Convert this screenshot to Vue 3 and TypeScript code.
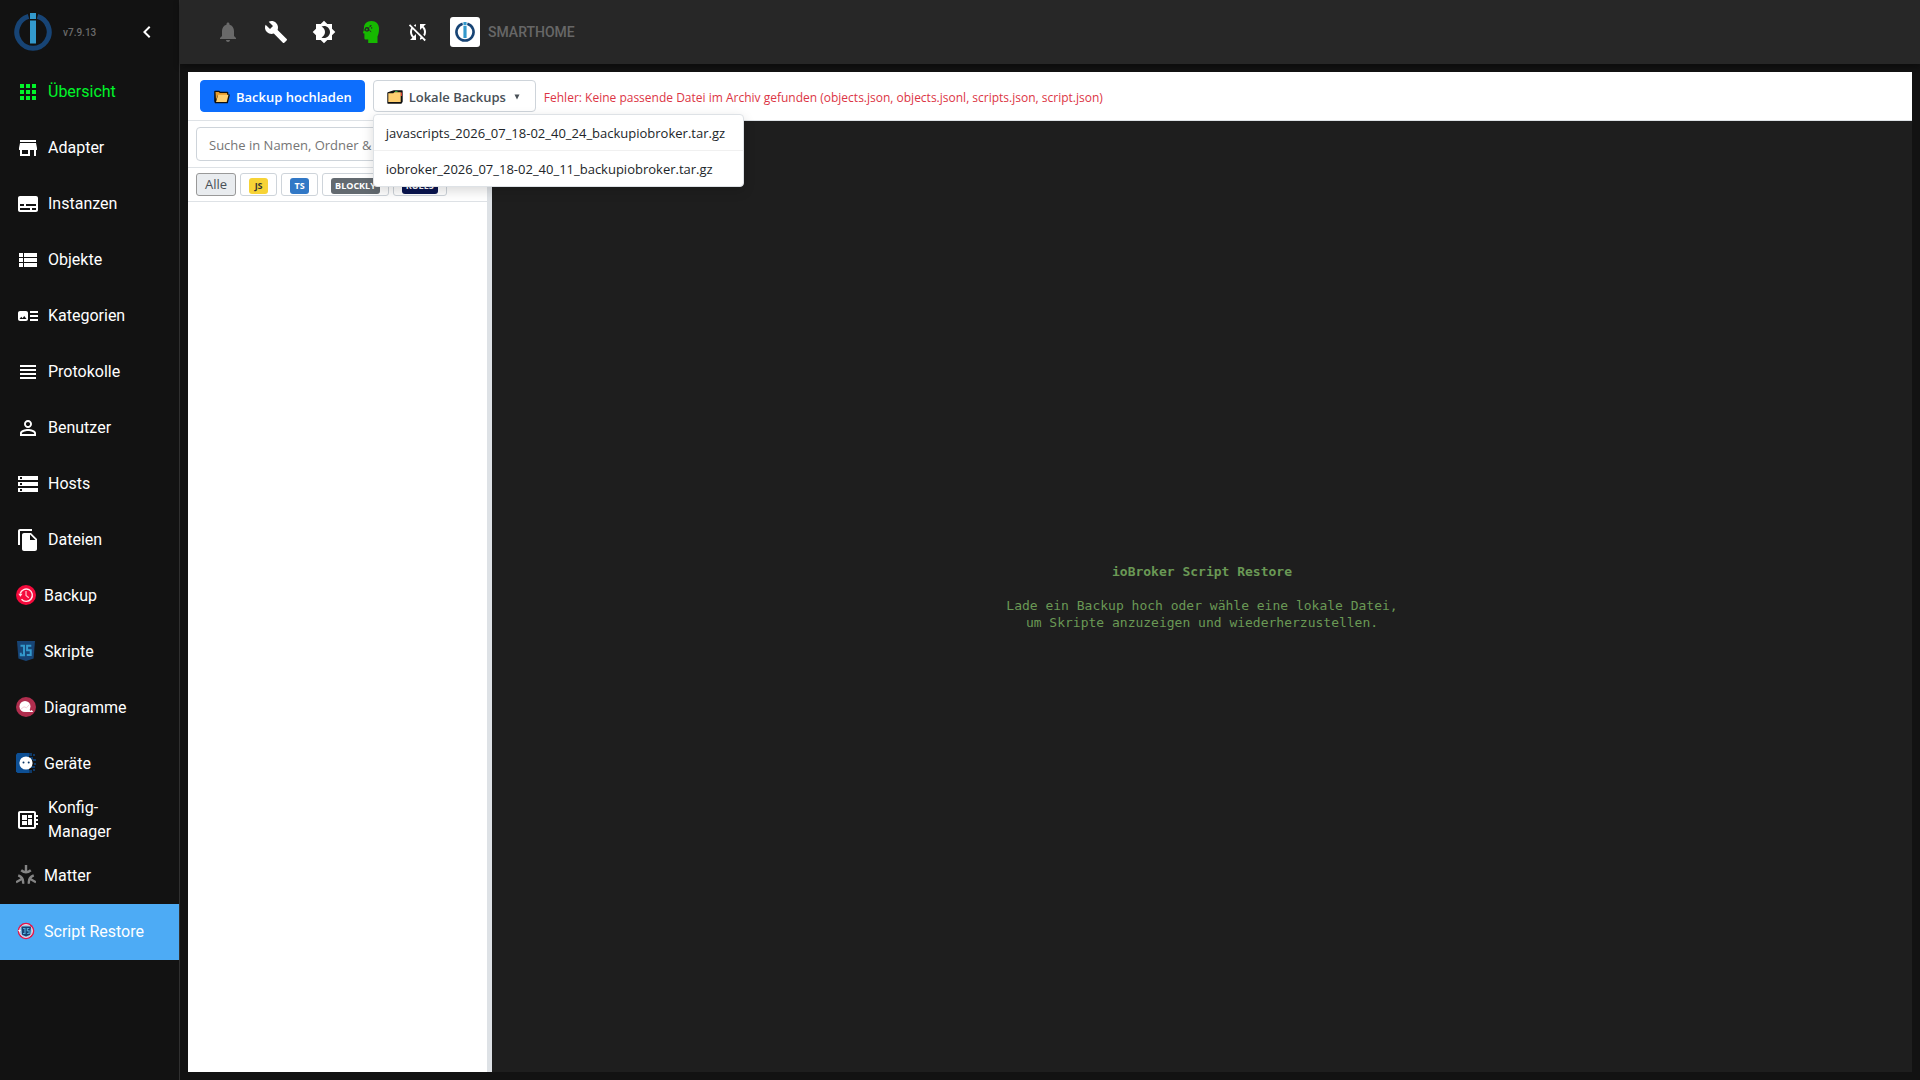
<script setup lang="ts">
import { ref } from 'vue'

interface NavItem {
  label: string
  icon?: string
  image?: string
}

const navItems: NavItem[] = [
  { label: 'Übersicht', icon: 'M4 8h4V4H4v4zm6 12h4v-4h-4v4zm-6 0h4v-4H4v4zm0-6h4v-4H4v4zm6 0h4v-4h-4v4zm6-10v4h4V4h-4zm-6 4h4V4h-4v4zm6 6h4v-4h-4v4zm0 6h4v-4h-4v4z' },
  { label: 'Adapter', icon: 'M20 4H4v2h16V4zm1 10v-2l-1-5H4l-1 5v2h1v6h10v-6h4v6h2v-6h1zm-9 4H6v-4h6v4z' },
  { label: 'Instanzen', icon: 'M20 4H4c-1.1 0-2 .9-2 2v12c0 1.1.9 2 2 2h16c1.1 0 2-.9 2-2V6c0-1.1-.9-2-2-2zM4 12h4v2H4v-2zm10 6H4v-2h10v2zm6 0h-4v-2h4v2zm0-4H10v-2h10v2z' },
  { label: 'Objekte', icon: 'M3 14h4v-4H3v4zm0 5h4v-4H3v4zM3 9h4V5H3v4zm5 5h13v-4H8v4zm0 5h13v-4H8v4zM8 5v4h13V5H8z' },
  { label: 'Kategorien', icon: 'M22 13h-8v-2h8v2zm0-6h-8v2h8V7zm-8 10h8v-2h-8v2zm-2-8v6c0 1.1-.9 2-2 2H4c-1.1 0-2-.9-2-2V9c0-1.1.9-2 2-2h6c1.1 0 2 .9 2 2zm-1.5 6l-2.25-3-1.75 2.26-1.25-1.51L3.5 15h7z' },
  { label: 'Protokolle', icon: 'M4 15h16v-2H4v2zm0 4h16v-2H4v2zm0-8h16V9H4v2zm0-6v2h16V5H4z' },
  { label: 'Benutzer', icon: 'M12 5.9c1.16 0 2.1.94 2.1 2.1s-.94 2.1-2.1 2.1S9.9 9.16 9.9 8s.94-2.1 2.1-2.1m0 9c2.97 0 6.1 1.46 6.1 2.1v1.1H5.9V17c0-.64 3.13-2.1 6.1-2.1M12 4C9.79 4 8 5.79 8 8s1.79 4 4 4 4-1.79 4-4-1.79-4-4-4zm0 9c-2.67 0-8 1.34-8 4v3h16v-3c0-2.66-5.33-4-8-4z' },
  { label: 'Hosts', icon: 'M2 20h20v-4H2v4zm2-3h2v2H4v-2zM2 4v4h20V4H2zm4 3H4V5h2v2zm-4 7h20v-4H2v4zm2-3h2v2H4v-2z' },
  { label: 'Dateien', icon: 'M16 1H4c-1.1 0-2 .9-2 2v14h2V3h12V1zm-1 4l6 6v10c0 1.1-.9 2-2 2H7.99C6.89 23 6 22.1 6 21l.01-14c0-1.1.89-2 1.99-2h7zm-1 7h5.5L14 6.5V12z' },
  { label: 'Backup', image: 'backup' },
  { label: 'Skripte', image: 'scripts' },
  { label: 'Diagramme', image: 'charts' },
  { label: 'Geräte', image: 'devices' },
  { label: 'Konfig-Manager', icon: 'M22 9V7h-2V5c0-1.1-.9-2-2-2H4c-1.1 0-2 .9-2 2v14c0 1.1.9 2 2 2h14c1.1 0 2-.9 2-2v-2h2v-2h-2v-2h2v-2h-2V9h2zm-4 10H4V5h14v14zM6 13h5v4H6v-4zm6-6h4v3h-4V7zM6 7h5v5H6V7zm6 4h4v6h-4v-6z' },
  { label: 'Matter', image: 'matter' },
  { label: 'Script Restore', image: 'restore' },
]

const activeItem = ref('Script Restore')
const menuOpen = ref(true)
const search = ref('')
const activeFilter = ref('Alle')

const backups = [
  'javascripts_2026_07_18-02_40_24_backupiobroker.tar.gz',
  'iobroker_2026_07_18-02_40_11_backupiobroker.tar.gz',
]

const badges = [
  { label: 'JS', kind: 'js' },
  { label: 'TS', kind: 'ts' },
  { label: 'BLOCKLY', kind: 'blockly' },
  { label: 'RULES', kind: 'rules' },
]
</script>

<template>
  <div class="shell">
    <aside class="sidebar">
      <div class="brand">
        <svg class="brand-logo" viewBox="0 0 38 38" aria-hidden="true">
          <path d="M14.5 3.4A16.2 16.2 0 1 0 23.5 3.4" fill="none" stroke="#174475" stroke-width="5" />
          <path fill="#3399cc" d="M16 0h6v6h-6zM16 7.500h6v23h-6z" />
        </svg>
        <span class="version">v7.9.13</span>
        <button class="collapse" type="button" aria-label="Menü einklappen">
          <svg class="icon" viewBox="0 0 24 24"><path d="M15.410 7.410 14 6l-6 6 6 6 1.410-1.410L10.830 12z" /></svg>
        </button>
      </div>
      <nav class="nav">
        <a
          v-for="(item, index) in navItems"
          :key="item.label"
          href="#"
          class="nav-item"
          :class="{ overview: index === 0, active: item.label === activeItem }"
          @click.prevent="activeItem = item.label"
        >
          <svg v-if="item.icon" class="icon" viewBox="0 0 24 24" aria-hidden="true"><path :d="item.icon" /></svg>
          <svg v-else class="picture" viewBox="0 0 20 20" aria-hidden="true">
            <template v-if="item.image === 'backup'">
              <circle cx="10" cy="10" r="10" fill="#f50a3c" />
              <path d="M4.200 8.500A6.200 6.200 0 1 1 5.500 14.300" fill="none" stroke="#ffe6ea" stroke-width="1.400" />
              <path d="M2.300 8.800h4.200L4.400 11.800z" fill="#ffe6ea" />
              <path d="M10 6v4.500l2.800 2.300" fill="none" stroke="#ffc4cf" stroke-width="1.200" />
            </template>
            <template v-else-if="item.image === 'scripts'">
              <path d="M1 0h18l-1.400 17.500L10 20l-7.600-2.500z" fill="#174475" />
              <path d="M4.500 4.700H8v9.500H4.800v-2.400M15.300 4.700h-4.200v4.600h3.600v4.800h-3.900" fill="none" stroke="#3399cc" stroke-width="2" />
            </template>
            <template v-else-if="item.image === 'charts'">
              <circle cx="10" cy="10" r="10" fill="#b02e4e" />
              <circle cx="9" cy="9.500" r="5.500" fill="#fff" />
              <path d="M5 12l3-2.200 2.500 1 3-3.400" fill="none" stroke="#f3cdd6" stroke-width="1" />
              <path d="M9 15h8.300l-1.600-2-1.200 1-2-3z" fill="#fff" />
            </template>
            <template v-else-if="item.image === 'devices'">
              <path d="M1.500 0H13v20H1.500L0 18.500v-17z" fill="#0d4f94" />
              <path d="M13 0h3v3h-3zM14 4h3v3h-3zM17 6h3v2h-3zM17 1h2v2h-2zM13 17h3v3h-3zM15 13h4v2h-4zM17 16h2v2h-2zM18 10h2v2h-2z" fill="#0f3a68" />
              <circle cx="10" cy="10" r="6.600" fill="#fff" />
              <circle cx="7.500" cy="9.500" r="1" fill="#0a3563" />
              <circle cx="12.700" cy="9.500" r="1" fill="#0a3563" />
            </template>
            <template v-else-if="item.image === 'matter'">
              <g fill="none" stroke="#858585" stroke-width="2.400">
                <path d="M10 0v8M5.200 5.300Q10 9.200 14.800 5.300" />
                <path d="M10 0v8M5.200 5.300Q10 9.200 14.800 5.300" transform="rotate(120 10 11.500)" />
                <path d="M10 0v8M5.200 5.300Q10 9.200 14.800 5.300" transform="rotate(240 10 11.500)" />
              </g>
            </template>
            <template v-else>
              <circle cx="10" cy="10" r="8.300" fill="#e3174b" />
              <circle cx="10" cy="10" r="6.400" fill="#8ac6ee" stroke="#f6dfe6" stroke-width="1" />
              <path d="M5.400 5.500h9.600l-.8 8.200L10 15.500l-4-1.800z" fill="#174475" />
              <path d="M7 7.500h2v5H7M13.300 7.500h-2v2.300h1.800v2.700h-2" fill="none" stroke="#55aadb" stroke-width="1.100" />
              <path d="M2 9h3l-1.600 2.200z" fill="#fff" />
            </template>
          </svg>
          <span class="nav-label">{{ item.label }}</span>
        </a>
      </nav>
    </aside>

    <div class="main">
      <header class="appbar">
        <button class="tool dim" type="button" aria-label="Benachrichtigungen">
          <svg class="icon" viewBox="0 0 24 24"><path d="M12 22c1.100 0 2-.9 2-2h-4c0 1.100.9 2 2 2zm6-6v-5c0-3.070-1.640-5.640-4.500-6.320V4c0-.83-.67-1.500-1.500-1.500s-1.500.67-1.500 1.500v.68C7.630 5.360 6 7.920 6 11v5l-2 2v1h16v-1l-2-2z" /></svg>
        </button>
        <button class="tool" type="button" aria-label="Systemeinstellungen">
          <svg class="icon" viewBox="0 0 24 24"><path d="M22.700 19l-9.100-9.100c.9-2.300.4-5-1.500-6.900-2-2-5-2.400-7.400-1.300L9 6 6 9 1.600 4.700C.4 7.100.9 10.100 2.900 12.100c1.900 1.900 4.600 2.400 6.900 1.500l9.100 9.100c.4.4 1 .4 1.400 0l2.300-2.300c.5-.4.5-1.100.1-1.400z" /></svg>
        </button>
        <button class="tool" type="button" aria-label="Farbschema">
          <svg class="icon" viewBox="0 0 24 24"><path d="M20 8.690V4h-4.690L12 .69 8.690 4H4v4.690L.69 12 4 15.310V20h4.690L12 23.310 15.310 20H20v-4.690L23.310 12 20 8.690zM12 18c-.89 0-1.740-.2-2.500-.55C11.560 16.500 13 14.420 13 12s-1.440-4.500-3.500-5.450C10.260 6.200 11.110 6 12 6c3.310 0 6 2.690 6 6s-2.690 6-6 6z" /></svg>
        </button>
        <button class="tool expert" type="button" aria-label="Expertenmodus">
          <svg class="icon" viewBox="0 0 24 24">
            <path d="M11.500 1C6.500 1 4 4.200 4 8c0 1.200-.3 2-.8 3l-.2 2.200 1.400.4v4.600c0 .9.500 1.300 1.300 1.300H8.200V23H17.500v-6.500c1-2.500 1.500-4.500 1.500-8C19 4 16 1 11.500 1z" />
            <circle cx="7" cy="9.300" r="2.400" fill="#272727" />
            <path d="M3 11.500l2-2M9.200 7.500l2-2M9.400 10.500l1.800 1.200M9.700 5.800h1.500M11.700 7.200v1.500" stroke="#272727" stroke-width="1" />
            <circle cx="6.800" cy="9.500" r=".9" />
          </svg>
        </button>
        <button class="tool narrow" type="button" aria-label="Synchronisierung aus">
          <svg class="icon" viewBox="0 0 24 24"><path d="M10 6.350V4.260c-.8.210-1.550.54-2.230.96l1.460 1.460c.25-.12.5-.24.77-.33zm-7.140-.94l2.360 2.360C4.450 8.990 4 10.440 4 12c0 2.210.91 4.200 2.360 5.640L4 20h6v-6l-2.240 2.240C6.680 15.150 6 13.660 6 12c0-1 .25-1.940.68-2.770l8.080 8.080c-.25.13-.5.25-.77.34v2.090c.8-.21 1.550-.54 2.230-.96l2.360 2.360 1.270-1.270L4.140 4.140 2.860 5.410zM20 4h-6v6l2.240-2.240C17.320 8.850 18 10.340 18 12c0 1-.25 1.940-.68 2.770l1.460 1.460C19.550 15.010 20 13.560 20 12c0-2.210-.91-4.200-2.360-5.640L20 4z" /></svg>
        </button>
        <a class="host" href="#">
          <span class="host-logo">
            <svg viewBox="0 0 38 38" aria-hidden="true">
              <path d="M14.500 3.400A16.200 16.200 0 1 0 23.500 3.400" fill="none" stroke="#174475" stroke-width="5" />
              <path fill="#3399cc" d="M16 0h6v6h-6zM16 7.500h6v23h-6z" />
            </svg>
          </span>
          <span>SMARTHOME</span>
        </a>
      </header>

      <main class="frame">
        <div class="toolbar">
          <button class="btn primary" type="button">
            <svg class="folder" viewBox="0 0 16 14" aria-hidden="true">
              <path d="M1 1.500h4l1 1h7.500V5H15l-1.800 7.500H1.500L1 11z" fill="#111" stroke="#111" stroke-width="1.600" stroke-linejoin="round" />
              <path d="M1.500 2h3.300l1 1H13v2H4L2 10z" fill="#e59a2c" />
              <path d="M4.200 4.800h10.300l-1.800 7.200H2z" fill="#ffcf70" />
            </svg>
            Backup hochladen
          </button>
          <div class="dropdown">
            <button class="btn outline" type="button" :aria-expanded="menuOpen" @click="menuOpen = !menuOpen">
              <svg class="folder" viewBox="0 0 16 14" aria-hidden="true">
                <path d="M1 3l6-2h8v10.500L14 13H1z" fill="#111" stroke="#111" stroke-width="1.400" stroke-linejoin="round" />
                <path d="M8 1h2.500v1.500H8z" fill="#2e9e3f" />
                <path d="M13.500 2.500H15V6h-1.500z" fill="#d63a2f" />
                <path d="M1.300 3.200h5l1-1h6.400v9.800H1.300z" fill="#ffcf70" />
              </svg>
              Lokale Backups
              <svg class="caret" viewBox="0 0 6 6" aria-hidden="true"><path d="M.5 .5h5L3 5.500z" /></svg>
            </button>
            <ul v-if="menuOpen" class="menu">
              <li v-for="file in backups" :key="file">
                <button class="menu-item" type="button">{{ file }}</button>
              </li>
            </ul>
          </div>
          <p class="error" role="alert">Fehler: Keine passende Datei im Archiv gefunden (objects.json, objects.jsonl, scripts.json, script.json)</p>
        </div>

        <div class="panes">
          <section class="list-pane">
            <div class="search-row">
              <input v-model="search" class="search" type="text" placeholder="Suche in Namen, Ordner &amp;" aria-label="Suche" />
            </div>
            <div class="filters">
              <button class="filter" :class="{ selected: activeFilter === 'Alle' }" type="button" @click="activeFilter = 'Alle'">Alle</button>
              <button
                v-for="badge in badges"
                :key="badge.kind"
                class="filter"
                :class="{ selected: activeFilter === badge.label }"
                type="button"
                @click="activeFilter = badge.label"
              >
                <span class="badge" :class="badge.kind">{{ badge.label }}</span>
              </button>
            </div>
          </section>
          <div class="splitter"></div>
          <section class="preview">
            <h1>ioBroker Script Restore</h1>
            <p>Lade ein Backup hoch oder wähle eine lokale Datei,<br />um Skripte anzuzeigen und wiederherzustellen.</p>
          </section>
        </div>
      </main>
    </div>
  </div>
</template>

<style>
body {
  margin: 0;
  background: #121212;
}
</style>

<style scoped>
.shell {
  display: flex;
  min-height: 100vh;
  background: #121212;
  color: #fff;
  font-family: Roboto, sans-serif;
}

button,
input {
  font-family: inherit;
}

button {
  cursor: pointer;
}

.icon {
  display: block;
  flex: none;
  width: 24px;
  height: 24px;
  fill: currentColor;
}

.sidebar {
  box-sizing: border-box;
  flex: none;
  width: 180px;
  border-right: 1px solid #303030;
}

.brand {
  display: flex;
  align-items: center;
  box-sizing: border-box;
  height: 64px;
  padding: 0 20px 0 14px;
}

.brand-logo {
  width: 38px;
  height: 38px;
}

.version {
  margin-left: 11px;
  color: #6b6b6b;
  font-size: 10px;
  font-weight: 500;
}

.collapse {
  margin-left: auto;
  padding: 0;
  border: 0;
  background: none;
  color: #fff;
}

.nav-item {
  display: flex;
  align-items: center;
  gap: 8px;
  box-sizing: border-box;
  height: 56px;
  padding: 0 24px 0 16px;
  color: #fff;
  font-size: 16px;
  line-height: 24px;
  text-decoration: none;
}

.nav-item.overview {
  color: #00f529;
}

.nav-item.active {
  background: #4dabf5;
}

.picture {
  flex: none;
  width: 20px;
  height: 20px;
  margin-bottom: 2px;
}

.main {
  display: flex;
  flex: 1;
  flex-direction: column;
  min-width: 0;
}

.appbar {
  display: flex;
  align-items: center;
  height: 64px;
  padding-left: 24px;
  background: #272727;
  box-shadow: 0 2px 6px rgba(0, 0, 0, 0.4);
}

.tool {
  padding: 12px;
  border: 0;
  background: none;
  color: #fff;
}

.tool.dim {
  color: #696969;
}

.tool.expert {
  color: #16b900;
}

.tool.narrow {
  padding: 12px 10px;
}

.host {
  display: flex;
  align-items: center;
  gap: 8px;
  margin-left: 10px;
  color: #676767;
  font-size: 14px;
  font-weight: 500;
  text-decoration: none;
}

.host-logo {
  display: flex;
  align-items: center;
  justify-content: center;
  width: 30px;
  height: 30px;
  border-radius: 3px;
  background: #fff;
}

.host-logo svg {
  width: 20px;
  height: 20px;
}

.frame {
  display: flex;
  flex: 1;
  flex-direction: column;
  margin: 8px;
  background: #fff;
  color: #212529;
  font-family: "Open Sans", "Noto Sans", sans-serif;
  font-size: 13px;
}

.toolbar {
  display: flex;
  align-items: center;
  gap: 8px;
  padding: 8px 12px;
  border-bottom: 1px solid #dee2e6;
}

.btn {
  display: flex;
  align-items: center;
  gap: 6px;
  box-sizing: border-box;
  height: 32px;
  padding: 2px 13px 0;
  border: 1px solid #ced4da;
  border-radius: 4px;
  background: #fff;
  color: #495057;
  font-size: 13px;
  font-weight: 600;
  white-space: nowrap;
}

.btn.primary {
  padding-right: 12px;
  border-color: #0d6efd;
  background: #0d6efd;
  color: #fff;
}

.folder {
  width: 16px;
  height: 14px;
}

.caret {
  width: 6px;
  height: 6px;
  margin: 0 2px;
  fill: currentColor;
}

.dropdown {
  position: relative;
}

.menu {
  position: absolute;
  top: 100%;
  left: 0;
  z-index: 10;
  box-sizing: border-box;
  min-width: 371px;
  margin: 2px 0 0;
  padding: 0;
  overflow: hidden;
  border: 1px solid #dee2e6;
  border-radius: 4px;
  background: #fff;
  box-shadow: 0 4px 12px rgba(0, 0, 0, 0.15);
  list-style: none;
}

.menu li + li {
  border-top: 1px solid #f0f0f0;
}

.menu-item {
  display: block;
  width: 100%;
  padding: 9px 12px 7px;
  border: 0;
  background: none;
  color: #212529;
  font-size: 13px;
  line-height: 19px;
  text-align: left;
  white-space: nowrap;
}

.error {
  margin: 0;
  padding-top: 2px;
  color: #dc3545;
  font-size: 12px;
}

.panes {
  display: flex;
  flex: 1;
}

.list-pane {
  flex: none;
  width: 299px;
}

.search-row {
  padding: 6px 8px;
  border-bottom: 1px solid #dee2e6;
}

.search {
  display: block;
  box-sizing: border-box;
  width: 100%;
  height: 34px;
  padding: 2px 12px 0;
  border: 1px solid #ced4da;
  border-radius: 4px;
  background: #fff;
  color: #212529;
  font-size: 13px;
}

.search::placeholder {
  color: #757575;
}

.filters {
  display: flex;
  gap: 4px;
  padding: 5px 8px;
  border-bottom: 1px solid #dee2e6;
}

.filter {
  display: flex;
  align-items: flex-end;
  box-sizing: border-box;
  height: 23px;
  padding: 0 8px 1px;
  border: 1px solid #ced4da;
  border-radius: 3px;
  background: #fff;
  color: #495057;
  font-size: 13px;
  line-height: 19px;
}

.filter.selected {
  border-color: #999;
  background: #e9ecef;
}

.badge {
  min-width: 19px;
  box-sizing: border-box;
  padding: 0 4px;
  border-radius: 3px;
  color: #fff;
  font-size: 9px;
  font-weight: 700;
  line-height: 16px;
  text-align: center;
}

.badge.js {
  background: #f7d336;
  color: #333;
}

.badge.ts {
  background: #3178c6;
}

.badge.blockly {
  background: #636a70;
}

.badge.rules {
  background: #0a1550;
}

.splitter {
  flex: none;
  width: 5px;
  background: #dee2e6;
}

.preview {
  display: flex;
  flex: 1;
  flex-direction: column;
  align-items: center;
  justify-content: center;
  gap: 17px;
  background: #1e1e1e;
  color: #6a9955;
  font-family: "DejaVu Sans Mono", monospace;
  font-size: 13px;
  line-height: 17px;
  text-align: center;
}

.preview h1,
.preview p {
  margin: 0;
  font-size: 13px;
}
</style>
